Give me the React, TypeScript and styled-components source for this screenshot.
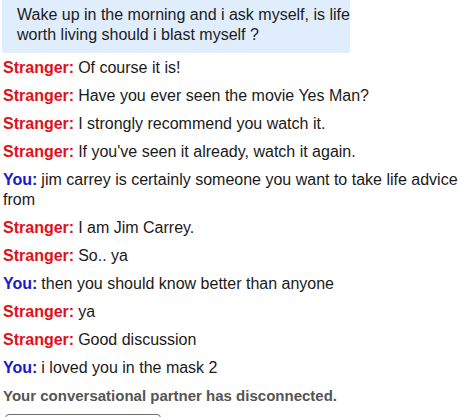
import React from "react";
import styled, { createGlobalStyle } from "styled-components";

const Global = createGlobalStyle`
  html, body { margin: 0; padding: 0; background: #fff; }
  body { font-family: Arial, "Liberation Sans", sans-serif; }
`;

const Log = styled.div`
  width: 460px;
  height: 417px;
  overflow: hidden;
  display: flex;
  flex-direction: column;
  padding: 0 0 0 3px;
  box-sizing: border-box;
`;

const Bubble = styled.div`
  margin-left: -1px;
  width: 348px;
  box-sizing: border-box;
  background: #dfedfd;
  color: #1c1c1c;
  font-size: 16px;
  line-height: 20px;
  padding: 5px 0 8px 15px;
  margin-bottom: 5px;
  border-radius: 0 0 2px 2px;
`;

const BubbleText = styled.div`
  margin-right: -12px;
`;

const Line = styled.p`
  margin: 0 0 8px;
  font-size: 16px;
  line-height: 20px;
  color: #1a1a1a;
`;

const Who = styled.strong<{ $me?: boolean }>`
  color: ${(p) => (p.$me ? "#1818cc" : "#e0101a")};
  font-weight: bold;
  margin-right: 4px;
`;

const Status = styled.p`
  margin: 0 0 8px;
  font-size: 15px;
  line-height: 20px;
  font-weight: bold;
  color: #555;
`;

const NewButton = styled.div`
  flex: none;
  margin-left: 2px;
  width: 156px;
  height: 34px;
  box-sizing: border-box;
  border: 1px solid #6e6e6e;
  border-radius: 4px;
  background: #fff;
`;

const lines: { me: boolean; text: string }[] = [
  { me: false, text: "Of course it is!" },
  { me: false, text: "Have you ever seen the movie Yes Man?" },
  { me: false, text: "I strongly recommend you watch it." },
  { me: false, text: "If you've seen it already, watch it again." },
  { me: true, text: "jim carrey is certainly someone you want to take life advice from" },
  { me: false, text: "I am Jim Carrey." },
  { me: false, text: "So.. ya" },
  { me: true, text: "then you should know better than anyone" },
  { me: false, text: "ya" },
  { me: false, text: "Good discussion" },
  { me: true, text: "i loved you in the mask 2" },
];

export default function App() {
  return (
    <>
      <Global />
      <Log>
        <Bubble>
          <BubbleText>
            Wake up in the morning and i ask myself, is life worth living should i blast myself ?
          </BubbleText>
        </Bubble>
        {lines.map((l, i) => (
          <Line key={i}>
            <Who $me={l.me}>{l.me ? "You:" : "Stranger:"}</Who>
            {l.text}
          </Line>
        ))}
        <Status>Your conversational partner has disconnected.</Status>
        <NewButton />
      </Log>
    </>
  );
}
